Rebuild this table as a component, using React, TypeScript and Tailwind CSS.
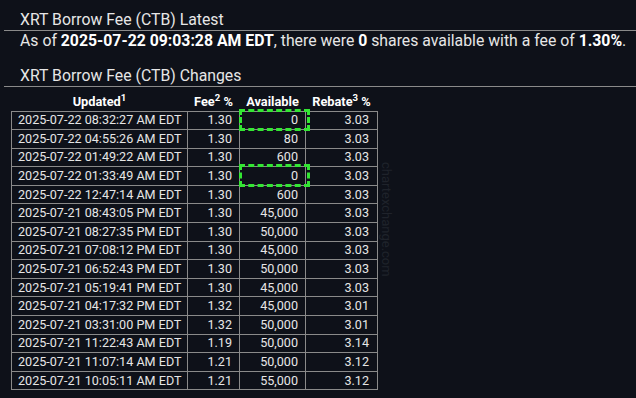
const rows: [string, string, string, string][] = [
  ["2025-07-22 08:32:27 AM EDT", "1.30", "0", "3.03"],
  ["2025-07-22 04:55:26 AM EDT", "1.30", "80", "3.03"],
  ["2025-07-22 01:49:22 AM EDT", "1.30", "600", "3.03"],
  ["2025-07-22 01:33:49 AM EDT", "1.30", "0", "3.03"],
  ["2025-07-22 12:47:14 AM EDT", "1.30", "600", "3.03"],
  ["2025-07-21 08:43:05 PM EDT", "1.30", "45,000", "3.03"],
  ["2025-07-21 08:27:35 PM EDT", "1.30", "50,000", "3.03"],
  ["2025-07-21 07:08:12 PM EDT", "1.30", "45,000", "3.03"],
  ["2025-07-21 06:52:43 PM EDT", "1.30", "50,000", "3.03"],
  ["2025-07-21 05:19:41 PM EDT", "1.30", "45,000", "3.03"],
  ["2025-07-21 04:17:32 PM EDT", "1.32", "45,000", "3.01"],
  ["2025-07-21 03:31:00 PM EDT", "1.32", "50,000", "3.01"],
  ["2025-07-21 11:22:43 AM EDT", "1.19", "50,000", "3.14"],
  ["2025-07-21 11:07:14 AM EDT", "1.21", "50,000", "3.12"],
  ["2025-07-21 10:05:11 AM EDT", "1.21", "55,000", "3.12"],
];

export default function App() {
  return (
    <div className="relative h-[398px] w-[636px] overflow-hidden bg-[#0e1119] pl-[4px] font-['Roboto',sans-serif] text-[#e6e6e6]">
      <h2 className="mt-[10px] border-b border-[#8a8a8a] pl-4 text-[15.8px] leading-[20px]">
        XRT Borrow Fee (CTB) Latest
      </h2>
      <p className="whitespace-nowrap pl-4 text-[15.8px] leading-[20px]">
        As of <b className="text-white">2025-07-22 09:03:28 AM EDT</b>, there were{" "}
        <b className="text-white">0</b> shares available with a fee of{" "}
        <b className="text-white">1.30%</b>.
      </p>

      <h2 className="mt-[14px] border-b border-[#8a8a8a] pl-4 text-[15.8px] leading-[21px]">
        XRT Borrow Fee (CTB) Changes
      </h2>

      <table className="ml-[7px] w-[366px] table-fixed border-collapse whitespace-nowrap text-[12.6px] leading-[16px]">
        <thead>
          <tr className="h-[24px] align-bottom text-[12.8px] font-bold text-white">
            <th className="w-[176px] pb-[1px] text-center">
              Updated<sup>1</sup>
            </th>
            <th className="w-[52px] pb-[1px] text-center">
              Fee<sup>2</sup> %
            </th>
            <th className="w-[66px] pb-[1px] text-center">Available</th>
            <th className="w-[72px] pb-[1px] text-center">
              Rebate<sup>3</sup> %
            </th>
          </tr>
        </thead>
        <tbody>
          {rows.map(([date, fee, avail, rebate], i) => (
            <tr key={i} className="h-[18.6px]">
              <td className="border border-[#8a8a8a] px-[6px] py-0 text-left">{date}</td>
              <td className="border border-[#8a8a8a] px-[7px] py-0 text-right">{fee}</td>
              <td className="relative border border-[#8a8a8a] px-[7px] py-0 text-right">
                {avail}
                {avail === "0" && (
                  <span className="pointer-events-none absolute -top-[3px] -right-[5px] -bottom-[2px] -left-[1px] border-[3px] border-dashed border-[#33e633]" />
                )}
              </td>
              <td className="border border-[#8a8a8a] px-[8px] py-0 text-right">{rebate}</td>
            </tr>
          ))}
        </tbody>
      </table>

      <span className="absolute left-[380px] top-[162px] text-[13px] leading-[13px] text-[#1f232b] [writing-mode:vertical-rl]">
        chartexchange.com
      </span>
    </div>
  );
}
